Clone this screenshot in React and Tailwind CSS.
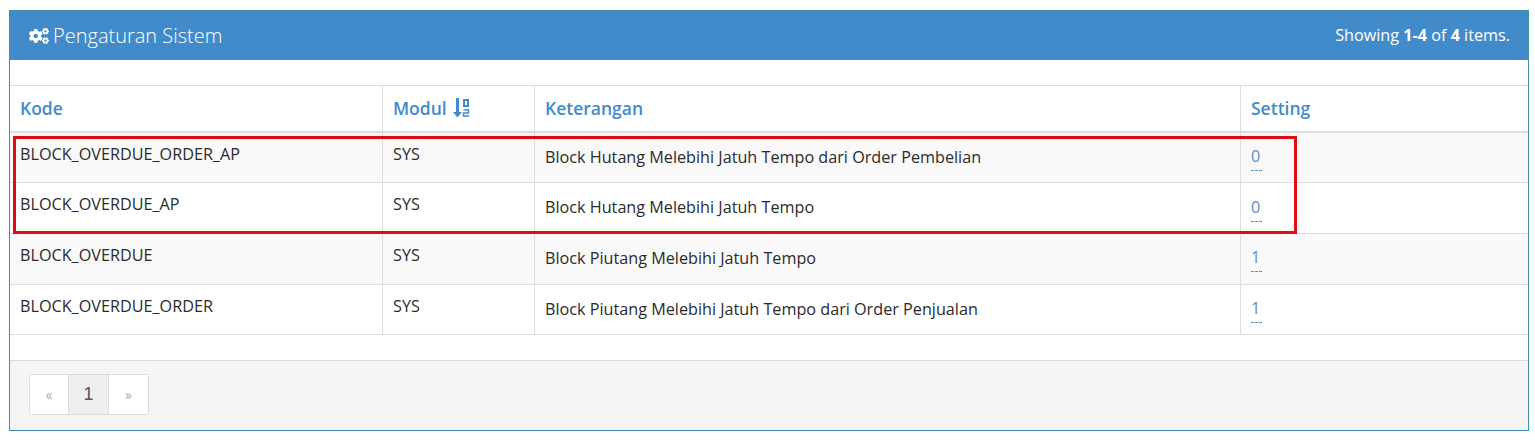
import { FaCogs } from 'react-icons/fa'

const rows = [
  { kode: 'BLOCK_OVERDUE_ORDER_AP', modul: 'SYS', ket: 'Block Hutang Melebihi Jatuh Tempo dari Order Pembelian', val: '0', bg: 'bg-[#f9f9f9]', h: 'h-[50px]', valPad: 'pt-[9px]' },
  { kode: 'BLOCK_OVERDUE_AP', modul: 'SYS', ket: 'Block Hutang Melebihi Jatuh Tempo', val: '0', bg: 'bg-white', h: 'h-[51px]', valPad: 'pt-[10px]' },
  { kode: 'BLOCK_OVERDUE', modul: 'SYS', ket: 'Block Piutang Melebihi Jatuh Tempo', val: '1', bg: 'bg-[#f9f9f9]', h: 'h-[51px]', valPad: 'pt-[9px]' },
  { kode: 'BLOCK_OVERDUE_ORDER', modul: 'SYS', ket: 'Block Piutang Melebihi Jatuh Tempo dari Order Penjualan', val: '1', bg: 'bg-white', h: 'h-[50px]', valPad: 'pt-[9px]' },
]

// old font-awesome sort-numeric-asc: arrow with two stacked digits
const SortIcon = () => (
  <svg width="17" height="20" viewBox="0 0 17 20" fill="currentColor" className="mt-[-1px]">
    <path d="M3 0h3v14h3l-4.5 5.5L0 14h3z" />
    <path fillRule="evenodd" d="M10 1h6v8h-6z M12 3v4h2V3z" />
    <path d="M10.5 12h5v3h-5v3h5.5" fill="none" stroke="currentColor" strokeWidth="1.4" />
  </svg>
)

const App = () => {
  return (
    <div className="h-[443px] bg-white pt-[10px] pl-[9px] pr-[6px] font-['Open_Sans',sans-serif] text-[16.2px] text-[#2b2b2b]">
      <div className="relative h-[421px] w-[1520px] border border-[#3e8fa8] flex flex-col">
        {/* Heading */}
        <div className="h-[49px] shrink-0 bg-[#428bca] text-white flex items-center justify-between pl-[19px] pr-[18px]">
          <div className="flex items-center gap-[4px] text-[20px] font-light">
            <FaCogs size={20} />
            <span>Pengaturan Sistem</span>
          </div>
          <div className="text-[16.2px]">
            Showing <b>1-4</b> of <b>4</b> items.
          </div>
        </div>

        <div className="h-[25px] shrink-0" />

        {/* Table */}
        <div className="border-t border-[#ddd]">
          <div className="h-[47px] grid grid-cols-[372px_152px_706px_1fr] border-b-2 border-[#ddd] text-[17.5px] font-semibold text-[#428bca]">
            <div className="pl-[10px] flex items-center">Kode</div>
            <div className="pl-[10px] flex items-center gap-[6px] border-l border-[#ddd]">
              Modul
              <SortIcon />
            </div>
            <div className="pl-[10px] flex items-center border-l border-[#ddd]">Keterangan</div>
            <div className="pl-[10px] flex items-center border-l border-[#ddd]">Setting</div>
          </div>
          {rows.map((row) => (
            <div key={row.kode} className={`${row.h} ${row.bg} grid grid-cols-[372px_152px_706px_1fr] border-b border-[#ddd]`}>
              <div className="pl-[10px] pt-[9px]">{row.kode}</div>
              <div className="pl-[10px] pt-[9px] border-l border-[#ddd]">{row.modul}</div>
              <div className="pl-[10px] pt-[12px] border-l border-[#ddd]">{row.ket}</div>
              <div className={`pl-[10px] ${row.valPad} border-l border-[#ddd]`}>
                <span className="text-[#5b8fc7] border-b border-dashed border-[#5b8fc7] inline-block leading-[28px] w-[11px]">{row.val}</span>
              </div>
            </div>
          ))}
        </div>

        <div className="flex-1" />

        {/* Footer */}
        <div className="h-[70px] shrink-0 bg-[#f5f5f5] border-t border-[#ddd] pt-[13px] pl-[19px]">
          <div className="flex w-fit h-[41px] border border-[#ddd] rounded-[3px] overflow-hidden">
            <span className="w-[39px] bg-white flex items-center justify-center text-[14px] text-[#aaa] border-r border-[#ddd]">«</span>
            <span className="w-[40px] bg-[#eee] flex items-center justify-center text-[18px] text-[#555] font-['Liberation_Sans',sans-serif] border-r border-[#ddd]">1</span>
            <span className="w-[39px] bg-white flex items-center justify-center text-[14px] text-[#aaa]">»</span>
          </div>
        </div>

        {/* Red highlight over the first two rows */}
        <div className="absolute left-[3px] top-[125px] w-[1284px] h-[98px] border-[3px] border-[#e00b13]" />
      </div>
    </div>
  )
}

export default App
